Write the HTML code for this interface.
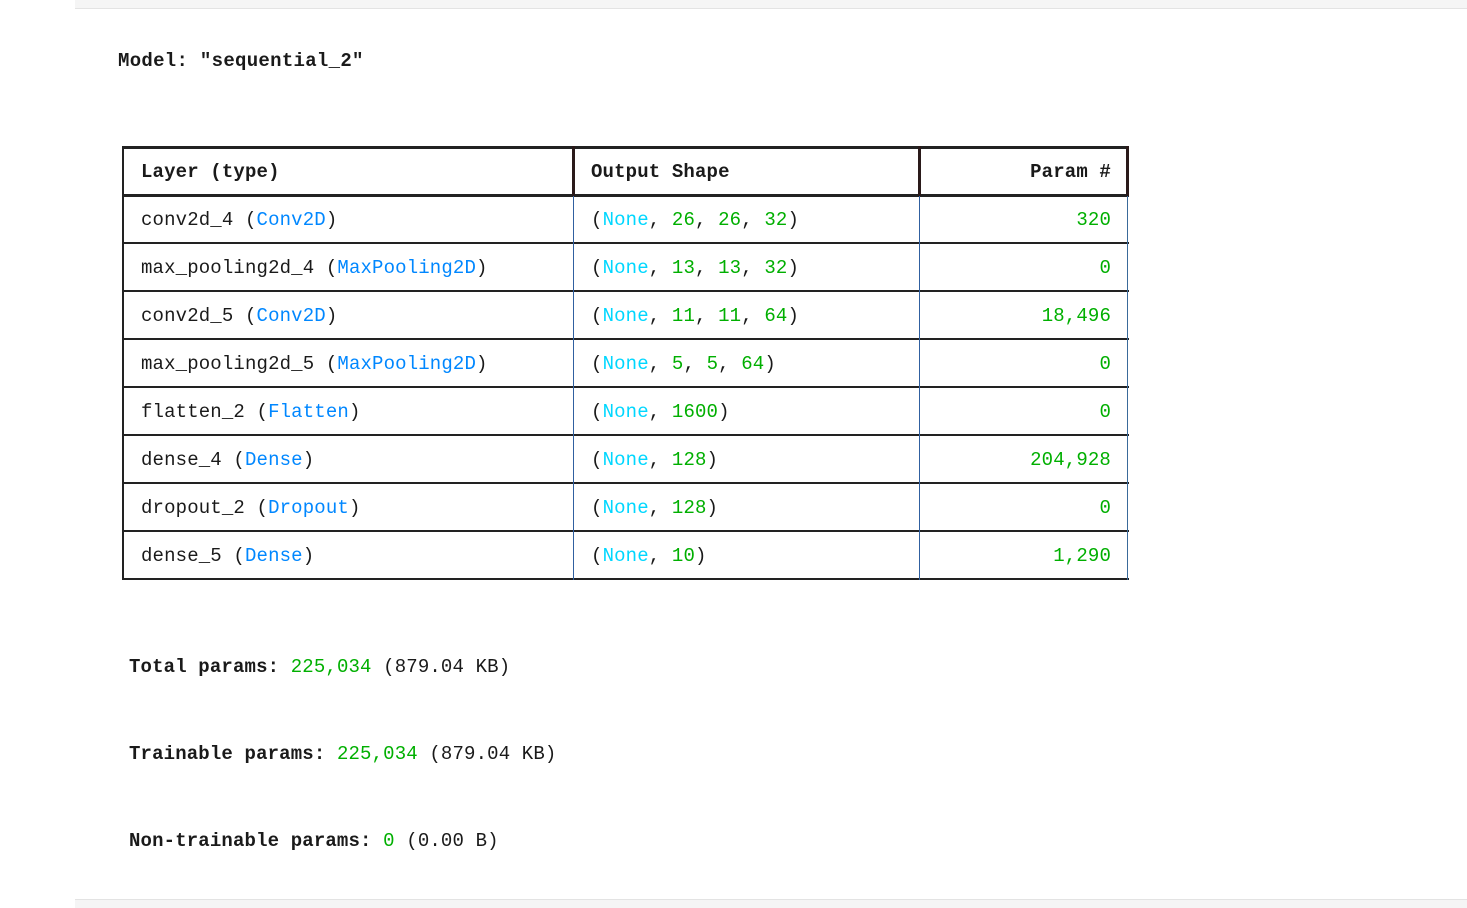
<!DOCTYPE html>
<html><head><meta charset="utf-8"><style>
body{margin:0;width:1467px;height:907px;background:#fff;position:relative;overflow:hidden;font-family:"Liberation Mono",monospace;color:#1a1a1a}
.t{position:absolute;white-space:pre;font-size:19px;line-height:20px;letter-spacing:0.15px}
.b{font-weight:bold}
.c{color:#00d7ff}.bl{color:#0087ff}.g{color:#00af00}
.h{position:absolute;background:#222;height:2px}
.v{position:absolute;width:2px}
</style></head><body>
<div style="position:absolute;left:75px;top:0;width:1392px;height:8px;background:#f5f5f5;border-bottom:1px solid #e3e3e3"></div>
<div style="position:absolute;left:75px;top:899px;width:1392px;height:8px;background:#f5f5f5;border-top:1px solid #e3e3e3"></div>
<div class="t b" style="left:118px;top:51px;letter-spacing:0.3px">Model: "sequential_2"</div>

<div class="h" style="left:122px;top:146px;width:1007px;height:3px"></div>
<div class="h" style="left:122px;top:194px;width:1007px;height:3px"></div>
<div class="h" style="left:122px;top:242px;width:1007px"></div>
<div class="h" style="left:122px;top:290px;width:1007px"></div>
<div class="h" style="left:122px;top:338px;width:1007px"></div>
<div class="h" style="left:122px;top:386px;width:1007px"></div>
<div class="h" style="left:122px;top:434px;width:1007px"></div>
<div class="h" style="left:122px;top:482px;width:1007px"></div>
<div class="h" style="left:122px;top:530px;width:1007px"></div>
<div class="h" style="left:122px;top:578px;width:1007px"></div>
<div class="v" style="left:122px;top:146px;height:434px;background:#222"></div>
<div class="v" style="left:572px;top:146px;height:50px;background:#2a1a1a;width:3px"></div>
<div class="v" style="left:918px;top:146px;height:50px;background:#2a1a1a;width:3px"></div>
<div class="v" style="left:1126px;top:146px;height:50px;background:#2a1a1a;width:3px"></div>
<div class="v" style="left:573px;top:196px;height:384px;background:#3060a0;width:1px"></div>
<div class="v" style="left:919px;top:196px;height:384px;background:#3060a0;width:1px"></div>
<div class="v" style="left:1127px;top:196px;height:384px;background:#3a6a9a;width:1px"></div>

<div class="t b" style="left:141px;top:162px">Layer (type)</div>
<div class="t b" style="left:591px;top:162px">Output Shape</div>
<div class="t b" style="right:356px;top:162px">Param #</div>

<div class="t" style="left:141px;top:210px">conv2d_4 (<span class="bl">Conv2D</span>)</div>
<div class="t" style="left:141px;top:258px">max_pooling2d_4 (<span class="bl">MaxPooling2D</span>)</div>
<div class="t" style="left:141px;top:306px">conv2d_5 (<span class="bl">Conv2D</span>)</div>
<div class="t" style="left:141px;top:354px">max_pooling2d_5 (<span class="bl">MaxPooling2D</span>)</div>
<div class="t" style="left:141px;top:402px">flatten_2 (<span class="bl">Flatten</span>)</div>
<div class="t" style="left:141px;top:450px">dense_4 (<span class="bl">Dense</span>)</div>
<div class="t" style="left:141px;top:498px">dropout_2 (<span class="bl">Dropout</span>)</div>
<div class="t" style="left:141px;top:546px">dense_5 (<span class="bl">Dense</span>)</div>

<div class="t" style="left:591px;top:210px">(<span class="c">None</span>, <span class="g">26</span>, <span class="g">26</span>, <span class="g">32</span>)</div>
<div class="t" style="left:591px;top:258px">(<span class="c">None</span>, <span class="g">13</span>, <span class="g">13</span>, <span class="g">32</span>)</div>
<div class="t" style="left:591px;top:306px">(<span class="c">None</span>, <span class="g">11</span>, <span class="g">11</span>, <span class="g">64</span>)</div>
<div class="t" style="left:591px;top:354px">(<span class="c">None</span>, <span class="g">5</span>, <span class="g">5</span>, <span class="g">64</span>)</div>
<div class="t" style="left:591px;top:402px">(<span class="c">None</span>, <span class="g">1600</span>)</div>
<div class="t" style="left:591px;top:450px">(<span class="c">None</span>, <span class="g">128</span>)</div>
<div class="t" style="left:591px;top:498px">(<span class="c">None</span>, <span class="g">128</span>)</div>
<div class="t" style="left:591px;top:546px">(<span class="c">None</span>, <span class="g">10</span>)</div>

<div class="t g" style="right:356px;top:210px">320</div>
<div class="t g" style="right:356px;top:258px">0</div>
<div class="t g" style="right:356px;top:306px">18,496</div>
<div class="t g" style="right:356px;top:354px">0</div>
<div class="t g" style="right:356px;top:402px">0</div>
<div class="t g" style="right:356px;top:450px">204,928</div>
<div class="t g" style="right:356px;top:498px">0</div>
<div class="t g" style="right:356px;top:546px">1,290</div>

<div class="t" style="left:129px;top:657px"><b>Total params:</b> <span class="g">225,034</span> (879.04 KB)</div>
<div class="t" style="left:129px;top:744px"><b>Trainable params:</b> <span class="g">225,034</span> (879.04 KB)</div>
<div class="t" style="left:129px;top:831px"><b>Non-trainable params:</b> <span class="g">0</span> (0.00 B)</div>
</body></html>
